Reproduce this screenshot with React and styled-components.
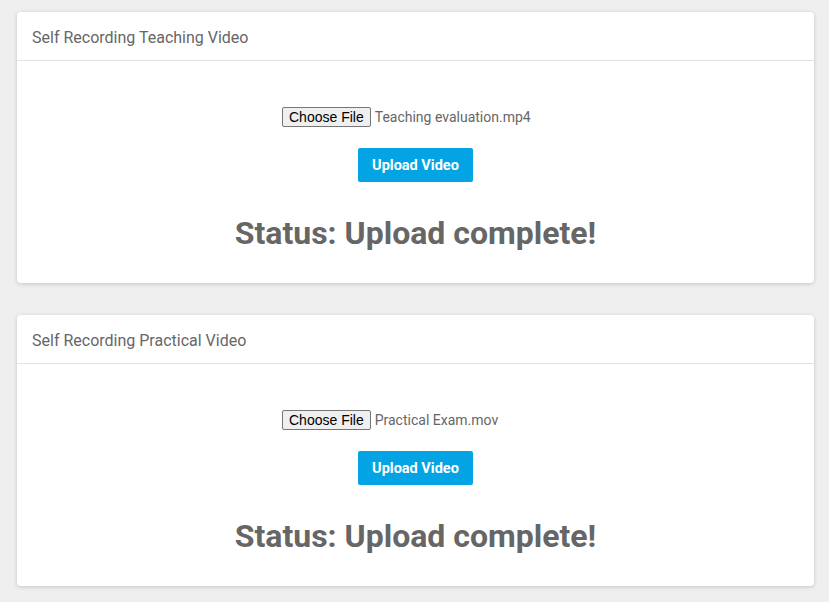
import React from "react";
import styled, { createGlobalStyle } from "styled-components";

const GlobalStyle = createGlobalStyle`
  html, body {
    margin: 0;
    padding: 0;
    background: #efefef;
    font-family: Roboto, "Liberation Sans", sans-serif;
  }
`;

const uploads = [
  { title: "Self Recording Teaching Video", file: "Teaching evaluation.mp4" },
  { title: "Self Recording Practical Video", file: "Practical Exam.mov" },
];

const App = () => {
  return (
    <Page>
      <GlobalStyle />
      {uploads.map((u) => (
        <Card key={u.title}>
          <CardHeader>{u.title}</CardHeader>
          <CardBody>
            <FileRow>
              <ChooseButton type="button">Choose File</ChooseButton>
              <FileName>{u.file}</FileName>
            </FileRow>
            <UploadButton type="button">Upload Video</UploadButton>
            <Status>Status: Upload complete!</Status>
          </CardBody>
        </Card>
      ))}
    </Page>
  );
};

const Page = styled.div`
  display: flex;
  flex-direction: column;
  gap: 32px;
  padding: 12px 15px 16px 17px;
`;

const Card = styled.section`
  background: #fff;
  border-radius: 4px;
  box-shadow: 0 1px 4px rgba(0, 0, 0, 0.18);
`;

const CardHeader = styled.div`
  height: 49px;
  box-sizing: border-box;
  padding: 2px 15px 0;
  display: flex;
  align-items: center;
  border-bottom: 1px solid #e2e2e2;
  font-size: 16px;
  color: #666;
`;

const CardBody = styled.div`
  display: flex;
  flex-direction: column;
  align-items: center;
  padding: 46px 20px 31px;
`;

const FileRow = styled.div`
  width: 267px;
  display: flex;
  align-items: center;
  gap: 4px;
  height: 20px;
`;

const ChooseButton = styled.button`
  font-family: "Liberation Sans", Arial, sans-serif;
  font-size: 14px;
  color: #000;
  background: #efefef;
  border: 1px solid #767676;
  border-radius: 2px;
  height: 20px;
  padding: 0 6px;
  line-height: 18px;
`;

const FileName = styled.span`
  font-size: 14px;
  color: #666;
  white-space: nowrap;
`;

const UploadButton = styled.button`
  margin-top: 21px;
  height: 34px;
  padding: 0 14px;
  border: none;
  border-radius: 2px;
  background: #03a3e4;
  color: #fff;
  font-family: Roboto, "Liberation Sans", sans-serif;
  font-weight: 700;
  font-size: 14.5px;
`;

const Status = styled.h2`
  margin: 32px 0 0;
  font-size: 32px;
  line-height: 38px;
  font-weight: 700;
  color: #666;
`;

export default App;
